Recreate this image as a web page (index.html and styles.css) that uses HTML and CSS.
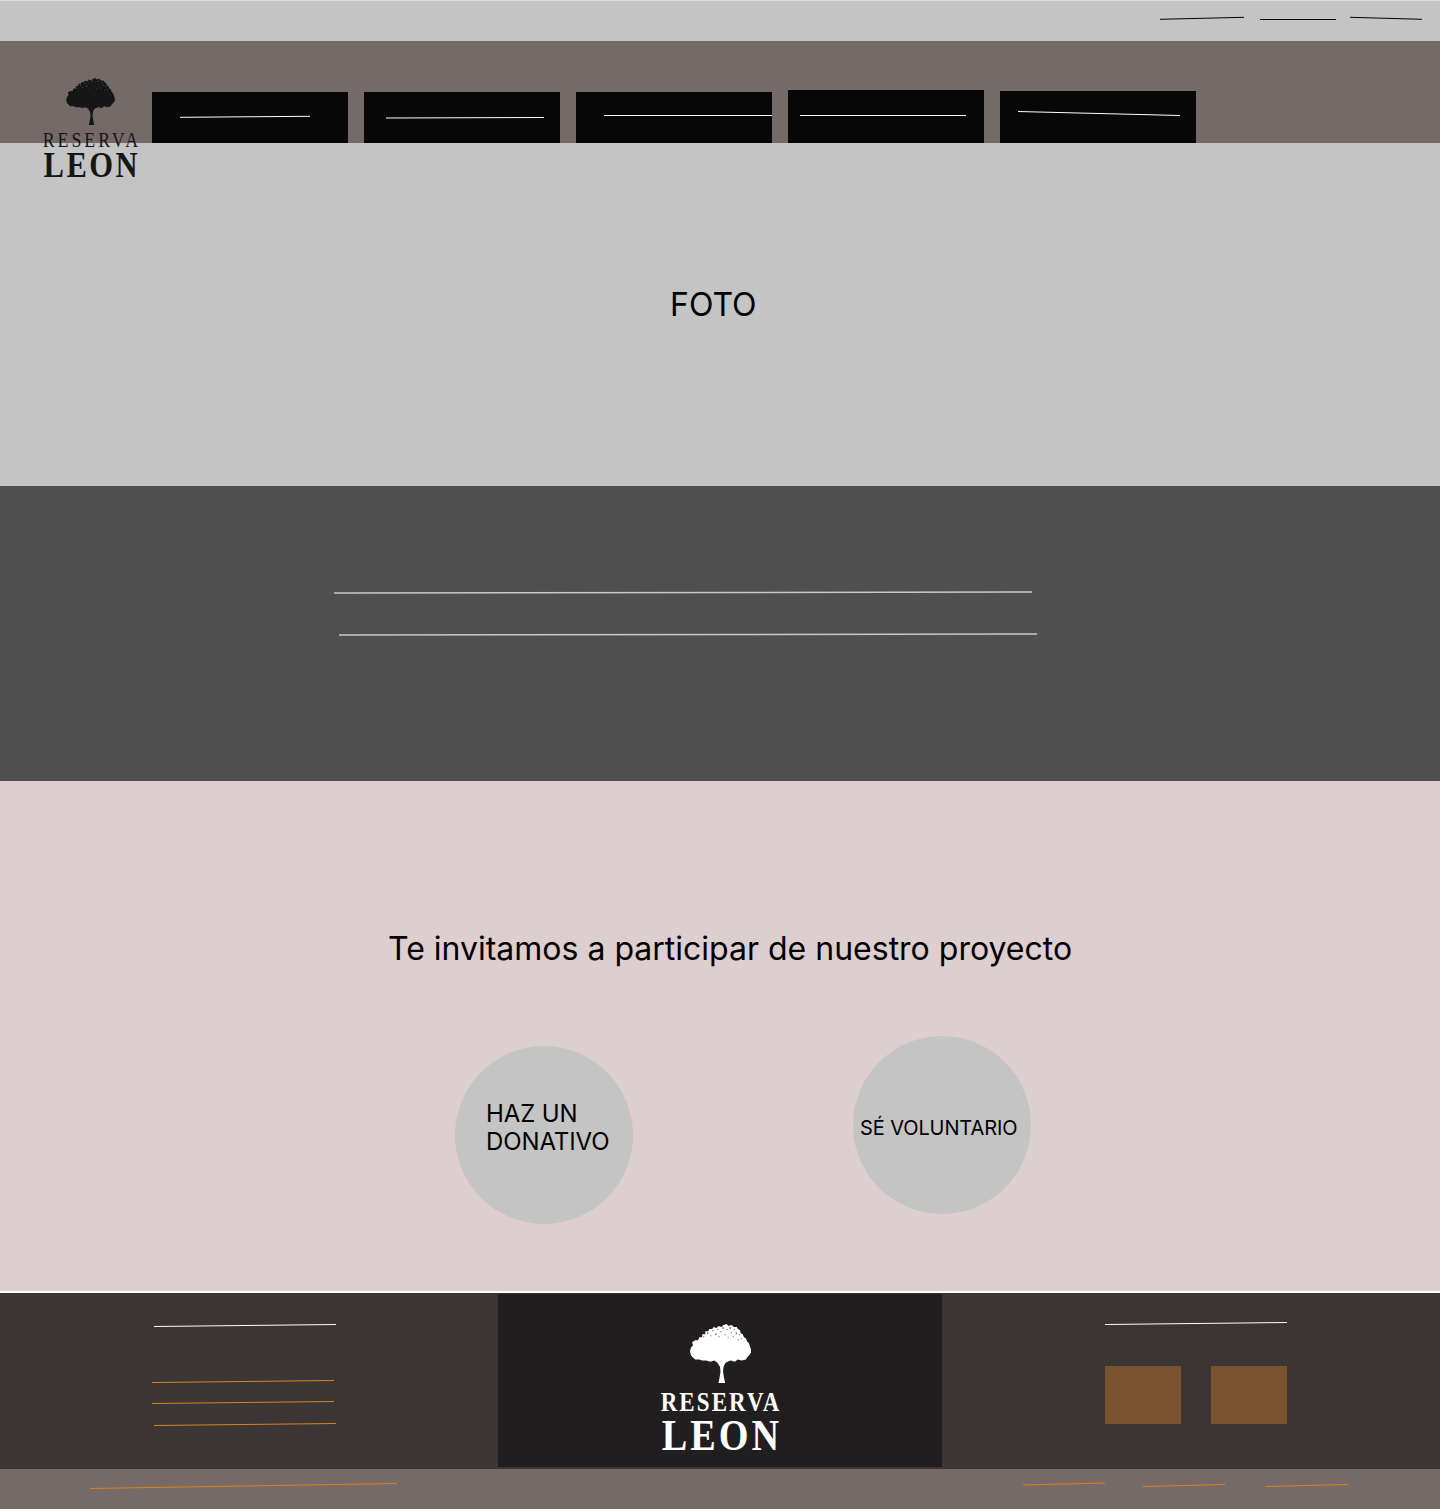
FILE: index.html
```html
<!DOCTYPE html>
<html lang="es">
<head>
<meta charset="utf-8">
<title>Reserva Leon</title>
<link rel="stylesheet" href="styles.css">
</head>
<body>
<svg class="defs" width="0" height="0" aria-hidden="true">
  <symbol id="tree" viewBox="0 0 60 58">
    <path d="M0 27L1 23L3 21L2 18L5 16L8 16L9 13L12 13L12 10L15 10L15 7L18 7L19 5L22 5L23 3L26 4L28 2L31 3L33 1L36 0L38 2L41 1L43 3L46 3L47 5L49 6L50 9L52 10L53 13L55 14L56 17L58 19L59 22L60 25L60 28L58 31L56 33L55 35L51 36L47 35L44 37L40 36L37 37L35 38L33 42L32.500 47L33.500 53L34.500 58L28 58L29 53L30 47L29.500 42L27 38L24 36L20 37L16 36L12 36L9 35L5 35L3 33L1 31Z"/>
    <path class="tree-gap" d="M13 12h1v1h-1zM17 8h1v2h-1zM20 11h1v1h-1zM22 6h1v1h-1zM25 9h1v2h-1zM27 5h1v1h-1zM30 7h1v1h-1zM32 3h1v2h-1zM34 10h1v1h-1zM36 5h1v1h-1zM39 3h1v2h-1zM40 8h1v1h-1zM43 5h1v1h-1zM45 8h1v2h-1zM42 12h1v1h-1zM48 10h1v1h-1zM50 14h1v1h-1zM37 13h1v1h-1zM28 12h1v1h-1zM47 15h1v1h-1z"/>
  </symbol>
</svg>

<header class="topbar">
  <svg class="sketch" viewBox="0 0 1440 40" aria-hidden="true">
    <line class="dark" x1="1160" y1="18.300" x2="1244" y2="16.300"/>
    <line class="dark" x1="1260" y1="18.500" x2="1336" y2="18.500"/>
    <line class="dark" x1="1350" y1="16.300" x2="1422" y2="18.300"/>
  </svg>
</header>

<nav class="mainbar">
  <div class="tab"></div>
  <div class="tab"></div>
  <div class="tab"></div>
  <div class="tab tab-tall"></div>
  <div class="tab tab-mid"></div>
  <svg class="sketch" viewBox="0 0 1440 102" aria-hidden="true">
    <line class="light" x1="180" y1="76.300" x2="310" y2="75.300"/>
    <line class="light" x1="386" y1="77" x2="544" y2="76.500"/>
    <line class="light" x1="604" y1="74.500" x2="772" y2="74.500"/>
    <line class="light" x1="800" y1="74.500" x2="966" y2="74.500"/>
    <line class="light" x1="1018" y1="70.500" x2="1180" y2="74.500"/>
  </svg>
  <div class="logo logo-header">
    <svg class="logo-tree"><use href="#tree"/></svg>
    <span class="logo-top">RESERVA</span>
    <span class="logo-main">LEON</span>
  </div>
</nav>

<section class="hero">
  <h1 class="hero-title">FOTO</h1>
</section>

<section class="band">
  <svg class="sketch" viewBox="0 0 1440 295" aria-hidden="true">
    <line class="pale" x1="334" y1="107" x2="1032" y2="106"/>
    <line class="pale" x1="339" y1="149" x2="1037" y2="148"/>
  </svg>
</section>

<section class="invite">
  <h2 class="invite-title">Te invitamos a participar de nuestro proyecto</h2>
  <div class="circles">
    <a class="circle circle-donate">HAZ UN<br>DONATIVO</a>
    <a class="circle circle-volunteer">SÉ VOLUNTARIO</a>
  </div>
</section>

<footer class="footer">
  <div class="footer-side"></div>
  <div class="footer-center">
    <div class="logo logo-footer">
      <svg class="logo-tree"><use href="#tree"/></svg>
      <span class="logo-top">RESERVA</span>
      <span class="logo-main">LEON</span>
    </div>
  </div>
  <div class="footer-side footer-right">
    <div class="square"></div>
    <div class="square"></div>
  </div>
  <svg class="sketch" viewBox="0 0 1440 176" aria-hidden="true">
    <line class="light" x1="154" y1="33.500" x2="336" y2="31.500"/>
    <line class="orange" x1="152" y1="89.500" x2="334" y2="87.500"/>
    <line class="orange" x1="152" y1="110.500" x2="334" y2="108.500"/>
    <line class="orange" x1="154" y1="132.500" x2="336" y2="130.500"/>
    <line class="light" x1="1105" y1="31.500" x2="1287" y2="29.500"/>
  </svg>
</footer>

<div class="legal">
  <svg class="sketch" viewBox="0 0 1440 40" aria-hidden="true">
    <line class="orange" x1="90" y1="19.500" x2="397" y2="14.500"/>
    <line class="orange" x1="1023" y1="16" x2="1105" y2="14"/>
    <line class="orange" x1="1143" y1="17.500" x2="1225" y2="15.500"/>
    <line class="orange" x1="1266" y1="17.500" x2="1348" y2="15.500"/>
  </svg>
</div>
</body>
</html>
```

FILE: styles.css
```css
* { box-sizing: border-box; }

html, body { margin: 0; padding: 0; }

body {
  width: 1440px;
  height: 1509px;
  overflow: hidden;
  background: #ffffff;
  color: #000000;
  font-family: Inter, "Liberation Sans", sans-serif;
}

.defs { position: absolute; }

.sketch {
  position: absolute;
  top: 0;
  left: 0;
  width: 100%;
  height: 100%;
  pointer-events: none;
}

.sketch line { stroke-width: 1; fill: none; }
.sketch .dark { stroke: #000000; }
.sketch .light { stroke: #ffffff; }
.sketch .pale { stroke: #c9c9c9; stroke-width: 1.500; }
.sketch .orange { stroke: #d9821c; }

.topbar {
  position: relative;
  height: 41px;
  background: #c4c4c4;
  border-top: 1px solid #dcdcdc;
}

.mainbar {
  position: relative;
  display: flex;
  align-items: flex-end;
  gap: 16px;
  height: 102px;
  padding-left: 152px;
  background: #756a68;
}

.tab {
  width: 196px;
  height: 51px;
  background: #070707;
}

.tab-tall { height: 53px; }
.tab-mid { height: 52px; }

.logo {
  display: flex;
  flex-direction: column;
  align-items: center;
  font-family: "Liberation Serif", "DejaVu Serif", serif;
  white-space: nowrap;
}

.logo-header {
  position: absolute;
  top: 37px;
  left: 43px;
  width: 94px;
  color: #161616;
  --gap: #5a5150;
}

.logo-footer {
  width: 120px;
  color: #ffffff;
  --gap: #5c5a5a;
}

.logo-tree { fill: currentColor; }
.tree-gap { fill: var(--gap); }

.logo-header .logo-tree { width: 49px; height: 47px; margin-bottom: 6px; }
.logo-footer .logo-tree { width: 61px; height: 59px; margin-bottom: 8px; }

.logo-top, .logo-main {
  display: block;
  transform: scaleX(.85);
}

.logo-header .logo-top {
  font-size: 21px;
  line-height: 18px;
  letter-spacing: 3.500px;
  margin-right: -3.500px;
}

.logo-header .logo-main {
  margin-top: 1px;
  font-size: 36px;
  line-height: 30px;
  font-weight: 700;
  letter-spacing: 2.900px;
  margin-right: -2.900px;
}

.logo-footer .logo-top {
  font-size: 27px;
  line-height: 23px;
  font-weight: 700;
  letter-spacing: 2.500px;
  margin-right: -2.500px;
}

.logo-footer .logo-main {
  margin-top: 2px;
  font-size: 45px;
  line-height: 38px;
  font-weight: 700;
  letter-spacing: 3.600px;
  margin-right: -3.600px;
}

.hero {
  height: 343px;
  padding: 142px 0 0 670px;
  background: #c4c4c4;
}

.hero-title, .invite-title {
  margin: 0;
  font-size: 32px;
  font-weight: 400;
  line-height: 39px;
}

.band {
  position: relative;
  height: 295px;
  background: #4f4f4f;
}

.invite {
  height: 510px;
  padding: 148px 0 0 388px;
  background: #ddcfcf;
}

.circles {
  display: flex;
  align-items: flex-start;
  gap: 220px;
  margin: 68px 0 0 67px;
}

.circle {
  display: flex;
  align-items: center;
  width: 178px;
  height: 178px;
  border-radius: 50%;
  background: #c4c4c4;
}

.circle-donate {
  margin-top: 10px;
  padding: 0 0 14px 31px;
  font-size: 24px;
  line-height: 28px;
  letter-spacing: -.1px;
}

.circle-volunteer {
  padding: 5px 0 0 7px;
  font-size: 20px;
  line-height: 24px;
  letter-spacing: -.1px;
  white-space: nowrap;
}

.footer {
  position: relative;
  display: grid;
  grid-template-columns: 498px 444px 498px;
  height: 178px;
  border-top: 2px solid #ffffff;
  background: #3c3535;
}

.footer-center {
  display: flex;
  justify-content: center;
  height: 173px;
  margin-top: 1px;
  padding-top: 30px;
  background: #201e1e;
}

.footer-right {
  display: flex;
  gap: 30px;
  padding: 73px 0 0 163px;
}

.square {
  width: 76px;
  height: 58px;
  background: #78532e;
}

.legal {
  position: relative;
  height: 40px;
  background: #756a68;
}
```
